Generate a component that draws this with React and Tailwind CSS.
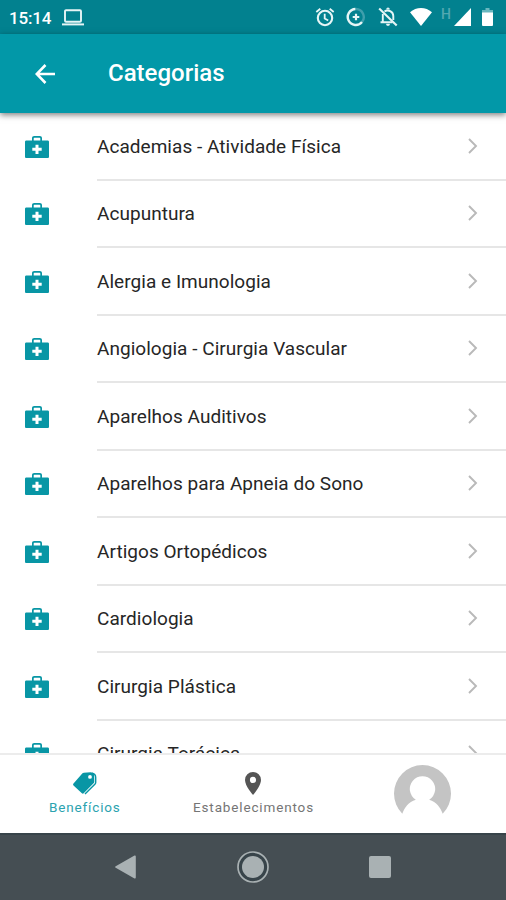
import React from "react";
import clsx from "clsx";

const categories = [
  "Academias - Atividade Física",
  "Acupuntura",
  "Alergia e Imunologia",
  "Angiologia - Cirurgia Vascular",
  "Aparelhos Auditivos",
  "Aparelhos para Apneia do Sono",
  "Artigos Ortopédicos",
  "Cardiologia",
  "Cirurgia Plástica",
  "Cirurgia Torácica",
];

const MedkitIcon = () => (
  <svg viewBox="0 0 24 22" className="w-6 h-[22px] shrink-0" fill="#0896a5">
    <path
      fillRule="evenodd"
      d="M7 4.500V2.200C7 .9 7.900 0 9.200 0h5.600C16.100 0 17 .9 17 2.200v2.300h5.700c.7 0 1.300.6 1.300 1.300v14.900c0 .7-.6 1.300-1.300 1.300H1.300C.6 22 0 21.400 0 20.700V5.800c0-.7.6-1.300 1.300-1.300zM8.700 4.500h6.600V2.400c0-.5-.2-.7-.7-.7H9.400c-.5 0-.7.2-.7.7zM10.500 8.700v3.100H7.300v3h3.200V18h3v-3.200h3.200v-3h-3.200V8.700z"
    />
  </svg>
);

const ChevronIcon = () => (
  <svg viewBox="0 0 10 16" className="w-2.5 h-4 shrink-0" fill="none" stroke="#b9b9b9" strokeWidth="1.900">
    <path d="M1 1l7 7-7 7" />
  </svg>
);

const StatusBar = () => (
  <div className="h-[34px] shrink-0 bg-[#02818f] flex items-center pl-[9px] pr-[13px] text-white">
    <span className="text-[17px] font-medium leading-none w-[43px] mt-0.5 tracking-[-0.200px]">15:14</span>
    <svg viewBox="0 0 22 17" className="w-[22px] h-[17px] ml-2.5" fill="none" stroke="#e6f5f6">
      <rect x="3" y="1.200" width="16" height="11.600" rx="1" strokeWidth="1.900" />
      <path d="M0 15.400h22" strokeWidth="2" />
    </svg>
    <div className="ml-auto flex items-center">
      {/* alarm */}
      <svg viewBox="0 0 20 20" className="size-5" fill="none" stroke="#e6f5f6" strokeWidth="2.100">
        <circle cx="10" cy="11" r="7.200" />
        <path d="M1.300 5l4-3.300M18.700 5l-4-3.300M9.700 6.800v4.700l3.500 2" strokeWidth="1.800" />
      </svg>
      {/* data saver */}
      <svg viewBox="0 0 20 20" className="size-5 ml-[11px]" fill="none" stroke="#e6f5f6" strokeWidth="2.400">
        <path d="M10 2a8 8 0 0 1 6 13" stroke="#3f9fac" />
        <path d="M9.500 2a8 8 0 1 0 6.500 13" />
        <path d="M10 6.700v6.600M6.700 10h6.600" strokeWidth="2.200" />
      </svg>
      {/* notifications off */}
      <svg viewBox="0 0 20 20" className="size-5 ml-3" fill="none" stroke="#e6f5f6" strokeWidth="1.900">
        <path d="M6.500 4.500C10 2 15.300 4.400 15.300 9v4M4.800 7v7.800M2.500 15.300h12" />
        <path d="M1.200 1.500l17.500 17" strokeWidth="2.100" />
        <path d="M8.500 2.300a1.500 1.500 0 0 1 3 0zM8.300 17h3.400a1.700 1.700 0 0 1-3.400 0z" fill="#e6f5f6" strokeWidth="0.500" />
      </svg>
      <svg viewBox="0 0 22 18" className="w-[22px] h-[18px] ml-3" fill="#fff">
        <path d="M11 18L0 4.300C6.300-1.400 15.700-1.400 22 4.300z" />
      </svg>
      <span className="ml-[9px] -mt-1.5 text-[14px] leading-none font-medium text-[#52a8b1]">H</span>
      <svg viewBox="0 0 17 18" className="w-[17px] h-[18px] ml-[3px]" fill="#fff">
        <path d="M17 0v18H0z" />
      </svg>
      <svg viewBox="0 0 11 18" className="w-[11px] h-[18px] ml-[11px]">
        <path d="M3.500 0h4v2H11v3H0V2h3.500z" fill="#6ab7bf" />
        <path d="M0 4.500h11V17a1 1 0 0 1-1 1H1a1 1 0 0 1-1-1z" fill="#fff" />
      </svg>
    </div>
  </div>
);

const Header = () => (
  <header className="h-[79px] shrink-0 bg-[#0298a8] flex items-center pl-[35px] shadow-[0_2px_6px_rgba(0,0,0,0.5)] relative z-10">
    <svg viewBox="0 0 20 20" className="size-5" fill="none" stroke="#fff" strokeWidth="2.600">
      <path d="M20 10H2M10.500 1L1.700 10l8.800 9" />
    </svg>
    <h1 className="ml-[53px] -mt-0.5 text-[24px] leading-none font-medium text-white">
      Categorias
    </h1>
  </header>
);

const CategoryRow = ({ name }) => (
  <li className="h-[67.500px] shrink-0 flex pl-[25px]">
    <div className="w-[72px] flex items-center">
      <MedkitIcon />
    </div>
    <div className="flex-1 flex items-center justify-between pr-7 border-b-2 border-[#e6e6e6]">
      <span className="mt-0.5 text-[19px] text-[#262626] tracking-[0.040px]">{name}</span>
      <ChevronIcon />
    </div>
  </li>
);

const Tab = ({ label, active, children }) => (
  <div className="flex-1 flex flex-col items-center pt-[17px]">
    {children}
    <span
      className={clsx(
        "mt-0.5 ml-px text-[13.500px] leading-5 tracking-[0.850px]",
        active ? "text-[#2ba3b0]" : "text-[#757575]"
      )}
    >
      {label}
    </span>
  </div>
);

const BottomTabs = () => (
  <nav className="h-20 shrink-0 bg-white border-t-2 border-[#ececec] flex">
    <Tab label="Benefícios" active>
      <svg viewBox="0 0 24 23" className="w-6 h-[23px] ml-0.5">
        <path d="M19 1.200c2.500.3 3.600 1.700 3.700 4v5.300c0 .6-.2 1-.6 1.400L12 22" fill="none" stroke="#0896a5" strokeWidth="1.400" strokeLinejoin="round" />
        <path
          fillRule="evenodd"
          d="M10.800.7L17.500.3c2 0 3.600 1.200 3.700 3l.1 6.400c0 .5-.2.900-.5 1.300L10.700 21.300c-.5.500-1.300.5-1.800 0L.5 13.400c-.6-.6-.6-1.500 0-2L9.500 1.200c.4-.3.800-.5 1.300-.5zM17 3a1.900 1.900 0 1 0 0 3.800A1.900 1.900 0 0 0 17 3z"
          fill="#0896a5"
        />
      </svg>
    </Tab>
    <Tab label="Estabelecimentos">
      <svg viewBox="0 0 16 23" className="w-4 h-[23px]" fill="#555">
        <path
          fillRule="evenodd"
          d="M8 0a8 8 0 0 0-8 8c0 6 8 15 8 15s8-9 8-15a8 8 0 0 0-8-8zm0 4.800a3.100 3.100 0 1 1 0 6.200 3.100 3.100 0 0 1 0-6.200z"
        />
      </svg>
    </Tab>
    <div className="flex-1 flex justify-center pt-2.5">
      <svg viewBox="0 0 57 57" className="size-[57px] ml-0.5">
        <path
          fillRule="evenodd"
          d="M8.300 48.700A28.500 28.500 0 1 1 48.700 48.700C46.500 42.500 42.500 37 35.200 34.700a12.700 12.700 0 1 0-13.400 0C14.500 37 10.500 42.500 8.300 48.700z"
          fill="#c4c4c4"
        />
      </svg>
    </div>
  </nav>
);

const SystemNav = () => (
  <div className="h-[67px] shrink-0 bg-[#454e53] border-t-2 border-[#38444a] flex items-center justify-center pb-0.5">
    <svg viewBox="0 0 21 24" className="w-[21px] h-6" fill="#a9b1b3">
      <path d="M19.500.6c.7-.4 1.300 0 1.300.8v21.200c0 .8-.6 1.200-1.300.8L.7 12.800c-.7-.4-.7-1.200 0-1.600z" />
    </svg>
    <svg viewBox="0 0 32 32" className="size-8 ml-[101px]">
      <circle cx="16" cy="16" r="15" fill="#38444a" stroke="#a9b1b3" strokeWidth="1.700" />
      <circle cx="16" cy="16" r="11" fill="#a9b1b3" />
    </svg>
    <div className="size-[22px] ml-[100px] rounded-[2px] bg-[#a9b1b3]" />
  </div>
);

const App = () => {
  return (
    <div className="w-[506px] h-[900px] flex flex-col overflow-hidden bg-white font-['Roboto',sans-serif]">
      <StatusBar />
      <Header />
      <ul className="flex-1 min-h-0 overflow-hidden flex flex-col">
        {categories.map((name) => (
          <CategoryRow key={name} name={name} />
        ))}
      </ul>
      <BottomTabs />
      <SystemNav />
    </div>
  );
};

export default App;
